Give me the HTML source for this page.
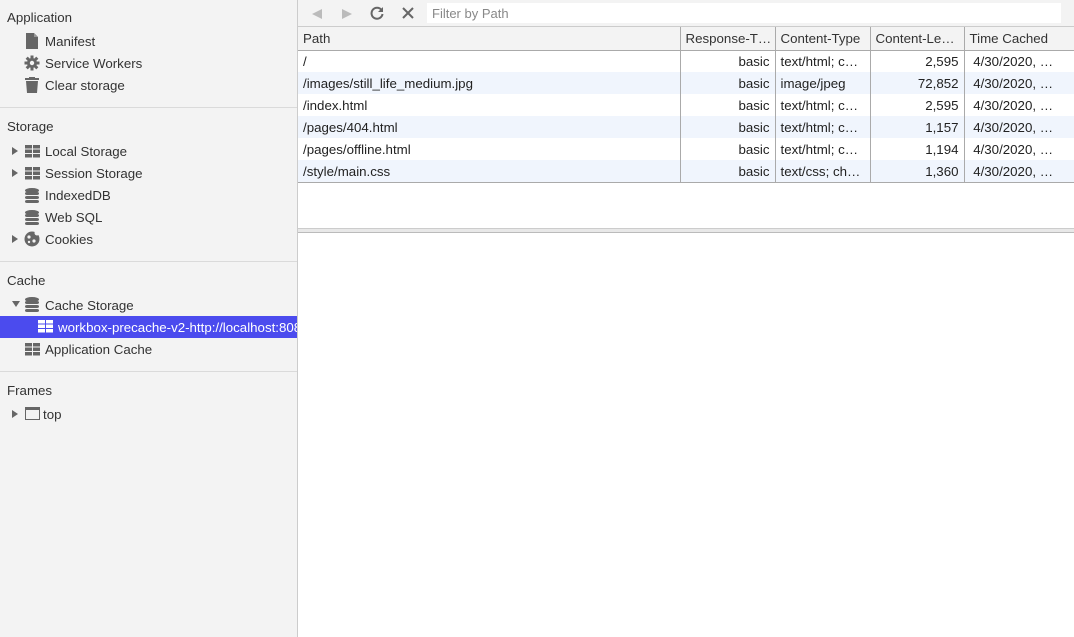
<!DOCTYPE html>
<html><head><style>
*{margin:0;padding:0;box-sizing:border-box}
body{width:1074px;height:637px;overflow:hidden;background:#fff;font-family:"Liberation Sans",sans-serif;font-size:13.3px;color:#222;position:relative}
.sb{position:absolute;left:0;top:0;width:298px;height:637px;background:#f3f3f3;border-right:1px solid #ccc}
.t{position:absolute;white-space:nowrap}
.h{left:7px;color:#333}
.it{left:45px;color:#333}
.hr{position:absolute;left:0;width:297px;height:1px;background:#dadada}
.ic{position:absolute}
.tri{position:absolute;width:0;height:0;border-top:4px solid transparent;border-bottom:4px solid transparent;border-left:6px solid #666}
.main{position:absolute;left:298px;top:0;right:0}
.tb{position:absolute;left:0;top:0;width:776px;height:27px;background:#f3f3f3;border-bottom:1px solid #ccc}
.inp{position:absolute;left:129px;top:3px;width:634px;height:20px;background:#fff;color:#888;padding:3px 5px;font-size:13px}
table{position:absolute;left:0;top:27px;width:776px;border-collapse:collapse;table-layout:fixed;font-size:13.3px}
td,th{height:22px;padding:1px 5px 0;font-weight:normal;text-align:left;white-space:nowrap;overflow:hidden;border-left:1px solid #aaa}
th{background:#f3f3f3;height:23px;border-bottom:1px solid #aaa;color:#333}
td:first-child,th:first-child{border-left:none}
tr.a td{background:#f0f5fd}
.r{text-align:right}
</style></head><body>
<div class="sb">
<div class="t h" style="top:10px">Application</div>
<svg class="ic" style="left:26px;top:33px" width="12" height="16"><path d="M0 0h8l4 4v12H0z" fill="#666"/><path d="M8 0v4h4" fill="#999"/></svg>
<div class="t it" style="top:34px">Manifest</div>
<svg class="ic" style="left:24px;top:55px" width="16" height="16" viewBox="0 0 16 16"><g fill="#666"><circle cx="8" cy="8" r="5"/><rect x="6.5" y="0.5" width="3" height="15"/><rect x="0.5" y="6.5" width="15" height="3"/><rect x="6.5" y="0.5" width="3" height="15" transform="rotate(45 8 8)"/><rect x="6.5" y="0.5" width="3" height="15" transform="rotate(-45 8 8)"/></g><circle cx="8" cy="8" r="2.2" fill="#f3f3f3"/></svg>
<div class="t it" style="top:56px">Service Workers</div>
<svg class="ic" style="left:25px;top:77px" width="14" height="16"><rect x="0" y="1" width="14" height="2" fill="#666"/><rect x="4" y="0" width="6" height="2" fill="#666"/><path d="M1 4h12l-1 12H2z" fill="#666"/></svg>
<div class="t it" style="top:78px">Clear storage</div>
<div class="hr" style="top:107px"></div>
<div class="t h" style="top:119px">Storage</div>
<div class="tri" style="left:12px;top:147px"></div>
<svg class="ic" style="left:25px;top:145px" width="15" height="13"><g fill="#666"><rect x="0" y="0" width="7" height="3.5"/><rect x="8" y="0" width="7" height="3.5"/><rect x="0" y="4.5" width="7" height="3.5"/><rect x="8" y="4.5" width="7" height="3.5"/><rect x="0" y="9" width="7" height="3.5"/><rect x="8" y="9" width="7" height="3.5"/></g></svg>
<div class="t it" style="top:144px">Local Storage</div>
<div class="tri" style="left:12px;top:169px"></div>
<svg class="ic" style="left:25px;top:167px" width="15" height="13"><g fill="#666"><rect x="0" y="0" width="7" height="3.5"/><rect x="8" y="0" width="7" height="3.5"/><rect x="0" y="4.5" width="7" height="3.5"/><rect x="8" y="4.5" width="7" height="3.5"/><rect x="0" y="9" width="7" height="3.5"/><rect x="8" y="9" width="7" height="3.5"/></g></svg>
<div class="t it" style="top:166px">Session Storage</div>
<svg class="ic" style="left:25px;top:188px" width="14" height="15"><g fill="#666"><ellipse cx="7" cy="2.5" rx="7" ry="2.5"/><rect x="0" y="4" width="14" height="3" rx="2"/><rect x="0" y="8" width="14" height="3" rx="2"/><rect x="0" y="12" width="14" height="3" rx="2"/></g></svg>
<div class="t it" style="top:188px">IndexedDB</div>
<svg class="ic" style="left:25px;top:210px" width="14" height="15"><g fill="#666"><ellipse cx="7" cy="2.5" rx="7" ry="2.5"/><rect x="0" y="4" width="14" height="3" rx="2"/><rect x="0" y="8" width="14" height="3" rx="2"/><rect x="0" y="12" width="14" height="3" rx="2"/></g></svg>
<div class="t it" style="top:210px">Web SQL</div>
<div class="tri" style="left:12px;top:235px"></div>
<svg class="ic" style="left:24px;top:231px" width="16" height="16"><circle cx="8" cy="8" r="7.5" fill="#666"/><circle cx="5" cy="6" r="1.6" fill="#f3f3f3"/><circle cx="10" cy="10" r="1.6" fill="#f3f3f3"/><circle cx="5" cy="11" r="1.2" fill="#f3f3f3"/><circle cx="13" cy="2" r="2.5" fill="#f3f3f3"/></svg>
<div class="t it" style="top:232px">Cookies</div>
<div class="hr" style="top:261px"></div>
<div class="t h" style="top:273px">Cache</div>
<div class="tri" style="left:12px;top:301px;border-left:4px solid transparent;border-right:4px solid transparent;border-top:6px solid #666;border-bottom:none"></div>
<svg class="ic" style="left:25px;top:297px" width="14" height="15"><g fill="#666"><ellipse cx="7" cy="2.5" rx="7" ry="2.5"/><rect x="0" y="4" width="14" height="3" rx="2"/><rect x="0" y="8" width="14" height="3" rx="2"/><rect x="0" y="12" width="14" height="3" rx="2"/></g></svg>
<div class="t it" style="top:298px">Cache Storage</div>
<div style="position:absolute;left:0;top:316px;width:297px;height:22px;background:#4b4bee;overflow:hidden">
<svg class="ic" style="left:38px;top:4px" width="15" height="13"><g fill="#fff"><rect x="0" y="0" width="7" height="3.5"/><rect x="8" y="0" width="7" height="3.5"/><rect x="0" y="4.5" width="7" height="3.5"/><rect x="8" y="4.5" width="7" height="3.5"/><rect x="0" y="9" width="7" height="3.5"/><rect x="8" y="9" width="7" height="3.5"/></g></svg>
<div class="t" style="left:58px;top:4px;color:#fff">workbox-precache-v2-http://localhost:8080/</div></div>
<svg class="ic" style="left:25px;top:343px" width="15" height="13"><g fill="#666"><rect x="0" y="0" width="7" height="3.5"/><rect x="8" y="0" width="7" height="3.5"/><rect x="0" y="4.5" width="7" height="3.5"/><rect x="8" y="4.5" width="7" height="3.5"/><rect x="0" y="9" width="7" height="3.5"/><rect x="8" y="9" width="7" height="3.5"/></g></svg>
<div class="t it" style="top:342px">Application Cache</div>
<div class="hr" style="top:371px"></div>
<div class="t h" style="top:383px">Frames</div>
<div class="tri" style="left:12px;top:410px"></div>
<div class="ic" style="left:25px;top:407px;width:15px;height:13px;border:1.5px solid #666;border-top-width:3px"></div>
<div class="t" style="left:43px;top:407px;color:#333">top</div>
</div>
<div class="main">
<div class="tb">
<div class="tri" style="left:14px;top:9px;border-left:none;border-right:10px solid #bbb;border-top:5px solid transparent;border-bottom:5px solid transparent"></div>
<div class="tri" style="left:44px;top:9px;border-left:10px solid #bbb;border-top:5px solid transparent;border-bottom:5px solid transparent"></div>
<svg class="ic" style="left:72px;top:6px" width="14" height="14" viewBox="0 0 14 14"><path d="M11.5 4A5.5 5.5 0 1 0 12.5 8" fill="none" stroke="#666" stroke-width="2"/><path d="M13 1v5H8z" fill="#666"/></svg>
<svg class="ic" style="left:104px;top:7px" width="12" height="12"><path d="M1 1L11 11M11 1L1 11" stroke="#666" stroke-width="2"/></svg>
<div class="inp">Filter by Path</div>
</div>
<table>
<colgroup><col style="width:382px"><col style="width:95px"><col style="width:95px"><col style="width:94px"><col></colgroup>
<tr><th>Path</th><th>Response-T…</th><th>Content-Type</th><th>Content-Le…</th><th>Time Cached</th></tr>
<tr><td>/</td><td class="r">basic</td><td>text/html; c…</td><td class="r">2,595</td><td>&nbsp;4/30/2020, …</td></tr>
<tr class="a"><td>/images/still_life_medium.jpg</td><td class="r">basic</td><td>image/jpeg</td><td class="r">72,852</td><td>&nbsp;4/30/2020, …</td></tr>
<tr><td>/index.html</td><td class="r">basic</td><td>text/html; c…</td><td class="r">2,595</td><td>&nbsp;4/30/2020, …</td></tr>
<tr class="a"><td>/pages/404.html</td><td class="r">basic</td><td>text/html; c…</td><td class="r">1,157</td><td>&nbsp;4/30/2020, …</td></tr>
<tr><td>/pages/offline.html</td><td class="r">basic</td><td>text/html; c…</td><td class="r">1,194</td><td>&nbsp;4/30/2020, …</td></tr>
<tr class="a"><td>/style/main.css</td><td class="r">basic</td><td>text/css; ch…</td><td class="r">1,360</td><td>&nbsp;4/30/2020, …</td></tr>
</table>
<div style="position:absolute;left:0;top:182px;width:776px;height:1px;background:#aaa"></div>
<div style="position:absolute;left:0;top:228px;width:776px;height:5px;background:#e8e8e8;border-top:1px solid #ccc;border-bottom:1px solid #bbb"></div>
</div>
</body></html>
